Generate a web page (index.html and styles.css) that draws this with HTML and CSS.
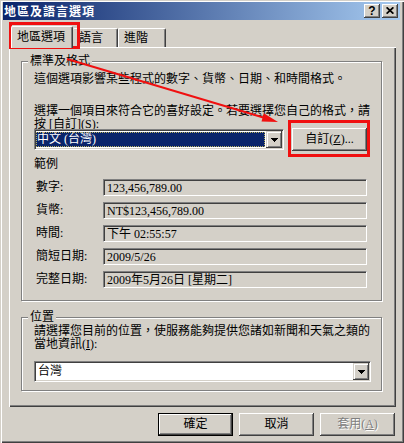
FILE: index.html
```html
<!DOCTYPE html>
<html lang="zh-Hant">
<head>
<meta charset="utf-8">
<title>地區及語言選項</title>
<link rel="stylesheet" href="styles.css">
</head>
<body>
<div class="window">
  <div class="titlebar">
    <span class="title">地區及語言選項</span>
    <div class="tb-buttons">
      <span class="tb-btn help">?</span>
      <span class="tb-btn close"><svg width="8" height="7" viewBox="0 0 8 7"><path d="M0.6 0.3L7.4 6.7M7.4 0.3L0.6 6.7" stroke="#000" stroke-width="1.7"/></svg></span>
    </div>
  </div>
  <div class="tabs">
    <div class="tab active">地區選項</div>
    <div class="tab t-lang">語言</div>
    <div class="tab t-adv">進階</div>
  </div>
  <div class="panel">
    <div class="group g1">
      <div class="legend">標準及格式</div>
      <p class="txt t1">這個選項影響某些程式的數字、貨幣、日期、和時間格式。</p>
      <p class="txt t2">選擇一個項目來符合它的喜好設定。若要選擇您自己的格式，請<br>按 [自訂](<u>S</u>):</p>
      <div class="fmt-row">
        <div class="combo fmt-combo">
          <span class="combo-val"><span class="sel">中文 (台灣)</span></span>
          <span class="combo-btn"><svg width="7" height="4" viewBox="0 0 7 4"><path d="M0 0h7v1h-1v1h-1v1h-1v1h-1v-1h-1v-1h-1v-1h-1z" fill="#000"/></svg></span>
        </div>
        <button class="btn custom">自訂(<u>Z</u>)...</button>
      </div>
      <div class="subhead">範例</div>
      <div class="samples">
        <span class="lbl">數字:</span><span class="field">123,456,789.00</span>
        <span class="lbl">貨幣:</span><span class="field">NT$123,456,789.00</span>
        <span class="lbl">時間:</span><span class="field">下午 02:55:57</span>
        <span class="lbl">簡短日期:</span><span class="field">2009/5/26</span>
        <span class="lbl">完整日期:</span><span class="field">2009年5月26日 [星期二]</span>
      </div>
    </div>
    <div class="group g2">
      <div class="legend">位置</div>
      <p class="txt t3">請選擇您目前的位置，使服務能夠提供您諸如新聞和天氣之類的<br>當地資訊(<u>I</u>):</p>
      <div class="combo loc-combo">
        <span class="combo-val"><span class="plain">台灣</span></span>
        <span class="combo-btn"><svg width="7" height="4" viewBox="0 0 7 4"><path d="M0 0h7v1h-1v1h-1v1h-1v1h-1v-1h-1v-1h-1v-1h-1z" fill="#000"/></svg></span>
      </div>
    </div>
  </div>
  <div class="footer">
    <button class="btn default">確定</button>
    <button class="btn">取消</button>
    <button class="btn disabled">套用(<u>A</u>)</button>
  </div>
  <svg class="annot" width="404" height="443" viewBox="0 0 404 443">
    <rect x="10.5" y="23.5" width="68" height="24" fill="none" stroke="#f01010" stroke-width="3"/>
    <rect x="289.5" y="121.5" width="79" height="34" fill="none" stroke="#f01010" stroke-width="3"/>
    <line x1="67" y1="59" x2="265" y2="118" stroke="#f01010" stroke-width="2"/>
    <path d="M278 122L261.5 121.5L263.8 113.2Z" fill="#f01010"/>
  </svg>
</div>
</body>
</html>
```

FILE: styles.css
```css
html, body {
  margin: 0;
  padding: 0;
  background: #D4D0C8;
}

body {
  font-family: "Liberation Serif", "Noto Sans CJK TC", serif;
  font-size: 12px;
  line-height: 13px;
  color: #000;
}

.window {
  position: relative;
  width: 404px;
  height: 443px;
  box-sizing: border-box;
  padding: 2px 4px 0 3px;
  background: #D4D0C8;
  box-shadow: inset 1px 1px 0 #D4D0C8, inset 2px 2px 0 #FFFFFF,
              inset -1px -1px 0 #404040, inset -2px -2px 0 #808080;
  display: flex;
  flex-direction: column;
}

/* title bar */
.titlebar {
  height: 18px;
  background: linear-gradient(to right, #0A246A, #A6CAF0);
  display: flex;
  align-items: center;
  justify-content: space-between;
  padding: 0 2px 0 1px;
}

.title {
  color: #fff;
  font-family: "Noto Sans CJK TC", sans-serif;
  font-weight: bold;
  font-size: 12px;
  letter-spacing: 1px;
  line-height: 18px;
}

.tb-buttons {
  display: flex;
  gap: 2px;
}

.tb-btn {
  width: 16px;
  height: 14px;
  box-sizing: border-box;
  background: #D4D0C8;
  box-shadow: inset -1px -1px 0 #404040, inset 1px 1px 0 #FFFFFF, inset -2px -2px 0 #808080;
  display: flex;
  align-items: center;
  justify-content: center;
}

.help {
  font-family: "Liberation Sans", sans-serif;
  font-weight: bold;
  font-size: 12px;
  line-height: 14px;
  padding-bottom: 1px;
}

.close svg {
  display: block;
  margin-top: -1px;
}

/* tabs */
.tabs {
  margin-top: 6px;
  height: 21px;
  padding-left: 8px;
  display: flex;
  align-items: flex-end;
  white-space: nowrap;
}

.tab {
  box-sizing: border-box;
  height: 19px;
  padding: 3px 0 0 5px;
  background: #D4D0C8;
  border-top: 1px solid #FFFFFF;
  border-left: 1px solid #FFFFFF;
  border-right: 1px solid #404040;
  box-shadow: inset -1px 0 0 #808080;
  border-top-left-radius: 2px;
  border-top-right-radius: 2px;
}

.tab.active {
  position: relative;
  z-index: 1;
  width: 62px;
  height: 22px;
  margin-bottom: -1px;
  padding-top: 4px;
}

.t-lang {
  width: 45px;
  border-left: none;
  padding-left: 6px;
}

.t-adv {
  width: 48px;
}

/* panel */
.panel {
  margin-left: 6px;
  width: 387px;
  height: 360px;
  box-sizing: border-box;
  box-shadow: inset 1px 1px 0 #FFFFFF, inset -1px -1px 0 #404040, inset -2px -2px 0 #808080;
  padding-top: 14px;
}

.group {
  margin-left: 12px;
  width: 361px;
  box-sizing: border-box;
  border: 1px solid #808080;
  box-shadow: 1px 1px 0 #FFFFFF, inset 1px 1px 0 #FFFFFF;
  padding: 0 12px 12px 12px;
}

.legend {
  width: fit-content;
  margin: -7px 0 0 -6px;
  padding: 0 2px;
  background: #D4D0C8;
  line-height: 13px;
}

.txt {
  margin: 0;
  white-space: nowrap;
}

.t1 { margin-top: 5px; }
.t2 { margin-top: 19px; }

.fmt-row {
  margin-top: -3px;
  display: flex;
  align-items: center;
  height: 23px;
}

/* combo box */
.combo {
  box-sizing: border-box;
  height: 21px;
  background: #FFFFFF;
  border: 1px solid;
  border-color: #808080 #FFFFFF #FFFFFF #808080;
  box-shadow: inset 1px 1px 0 #404040, inset -1px -1px 0 #D4D0C8;
  padding: 1px;
  display: flex;
  flex-shrink: 0;
}

.fmt-combo { width: 250px; }

.combo-val {
  flex: 1;
  display: flex;
  padding: 1px 1px 1px 0;
  white-space: nowrap;
}

.sel {
  flex: 1;
  background: #0A246A;
  color: #fff;
  padding-left: 1px;
  line-height: 15px;
  outline: 1px dotted #B8B060;
  outline-offset: -1px;
}

.plain {
  padding-left: 2px;
  line-height: 15px;
}

.combo-btn {
  width: 16px;
  height: 17px;
  box-sizing: border-box;
  background: #D4D0C8;
  box-shadow: inset -1px -1px 0 #404040, inset 1px 1px 0 #D4D0C8, inset 2px 2px 0 #FFFFFF, inset -2px -2px 0 #808080;
  display: flex;
  align-items: center;
  justify-content: center;
}

.combo-btn svg { display: block; }

/* buttons */
.btn {
  width: 75px;
  height: 23px;
  flex-shrink: 0;
  box-sizing: border-box;
  border: none;
  background: #D4D0C8;
  font: inherit;
  color: #000;
  padding: 0;
  white-space: nowrap;
  box-shadow: inset -1px -1px 0 #404040, inset 1px 1px 0 #FFFFFF, inset -2px -2px 0 #808080;
}

.custom {
  margin-left: 8px;
}

.subhead {
  margin-top: 7px;
}

.samples {
  margin-top: 8px;
  display: grid;
  grid-template-columns: 69px 264px;
  grid-auto-rows: 17px;
  row-gap: 6px;
  align-items: center;
}

.lbl {
  padding-left: 2px;
  white-space: nowrap;
}

.field {
  height: 17px;
  box-sizing: border-box;
  border: 1px solid;
  border-color: #808080 #FFFFFF #FFFFFF #808080;
  box-shadow: inset 1px 1px 0 #404040, inset -1px -1px 0 #D4D0C8;
  padding: 1px 0 0 3px;
  line-height: 14px;
  white-space: nowrap;
  overflow: hidden;
}

.g2 {
  margin-top: 16px;
  padding-bottom: 8px;
}

.t3 { margin-top: 1px; }

.loc-combo {
  margin-top: 10px;
  width: 337px;
}

/* footer */
.footer {
  margin-top: 6px;
  display: flex;
  justify-content: flex-end;
  gap: 6px;
  padding-right: 5px;
}

.btn.default {
  border: 1px solid #000;
  box-shadow: inset -1px -1px 0 #404040, inset 1px 1px 0 #FFFFFF, inset -2px -2px 0 #808080;
}

.btn.disabled {
  color: #808080;
  text-shadow: 1px 1px 0 #FFFFFF;
}

/* annotation overlay */
.annot {
  position: absolute;
  top: 0;
  left: 0;
  pointer-events: none;
}
```
